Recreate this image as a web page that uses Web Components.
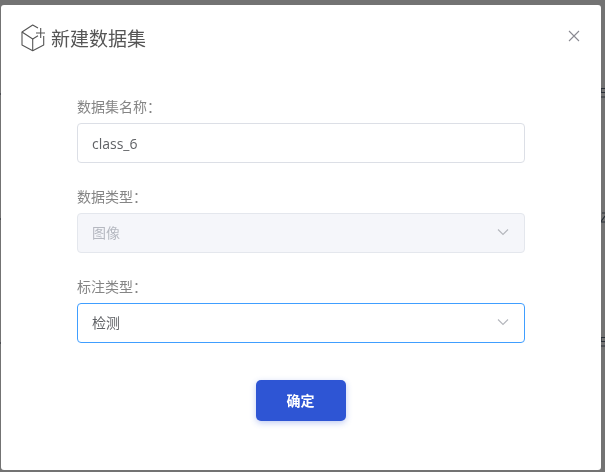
<!DOCTYPE html>
<html lang="zh">
<head>
<meta charset="utf-8">
<title>新建数据集</title>
<style>
  html, body { margin: 0; height: 100%; background: #737373; overflow: hidden; }
  body { font-family: "Open Sans", "Noto Sans CJK SC", sans-serif; }
</style>
</head>
<body>
<page-marks></page-marks>
<dataset-dialog heading="新建数据集">
  <form-field label="数据集名称：">
    <text-box value="class_6"></text-box>
  </form-field>
  <form-field label="数据类型：">
    <select-box value="图像" disabled></select-box>
  </form-field>
  <form-field label="标注类型：">
    <select-box value="检测" focused></select-box>
  </form-field>
  <primary-button slot="footer">确定</primary-button>
</dataset-dialog>

<script>
// what still shows of the page behind the dialog: slivers at the left and right edge
class PageMarks extends HTMLElement {
    constructor() {
        super();
        this.attachShadow({ mode: 'open' });
    }

    connectedCallback() {
        const five = 'M0 1.5 H4 M0 5.5 H4 M0 1.5 V5.5 M0 10 H4';
        const two = 'M0 9.5 L4 4 M0 10 H4 M1 1 H4';
        const rows = [five, two, five].map(d => `
            <div class="row">
                <svg class="l" viewBox="0 0 1 11"><path d="M0 7 H1" stroke="#262b33"/></svg>
                <svg class="r" viewBox="0 0 4 11" fill="none" stroke="#2a3038" stroke-width="1.2"><path d="${d}"/></svg>
            </div>`);
        this.shadowRoot.innerHTML = `
            <style>
                :host {
                    position: fixed;
                    inset: 0;
                    display: flex;
                    flex-direction: column;
                    gap: 113.5px;
                    padding-top: 87px;
                    box-sizing: border-box;
                }
                .row { display: flex; justify-content: space-between; height: 11px; }
                svg { display: block; height: 11px; }
                .l { width: 1px; }
                .r { width: 4px; }
            </style>
            ${rows.join('')}
        `;
    }
}

class DatasetDialog extends HTMLElement {
    constructor() {
        super();
        this.attachShadow({ mode: 'open' });
    }

    connectedCallback() {
        this.shadowRoot.innerHTML = `
            <style>
                :host {
                    display: block;
                    position: relative;
                    box-sizing: border-box;
                    height: 100%;
                    padding: 5px 4px 2px 1px;
                }
                .dialog {
                    box-sizing: border-box;
                    height: 465px;
                    background: #fff;
                    border-radius: 3px;
                    display: flex;
                    flex-direction: column;
                }
                .header {
                    display: flex;
                    align-items: center;
                    height: 66px;
                    padding: 0 20px;
                    color: #555;
                }
                .header svg.logo { width: 28px; height: 28px; margin-right: 2px; flex: none; }
                h1 {
                    margin: 0;
                    padding-top: 2px;
                    font-size: 19px;
                    font-weight: 400;
                    line-height: 64px;
                    flex: 1;
                }
                .close { width: 14px; height: 14px; margin-bottom: 4px; flex: none; }
                .body {
                    display: flex;
                    flex-direction: column;
                    gap: 24px;
                    padding: 26px 76px 0;
                }
                .footer {
                    display: flex;
                    justify-content: center;
                    padding-top: 37px;
                }
            </style>
            <div class="dialog">
                <div class="header">
                    <svg class="logo" viewBox="0 0 28 28" fill="none" stroke="#555" stroke-width="1.1" stroke-linejoin="round">
                        <path d="M17 4 L11.7 1 L1 8 V21 L11.7 26.7 L22.7 21 V12"/>
                        <path d="M1 8 L11.7 15 L17 11.8"/>
                        <path d="M11.7 15 V26.7"/>
                        <path d="M19.7 4 V14 M15 9 H24"/>
                    </svg>
                    <h1>${this.getAttribute('heading')}</h1>
                    <svg class="close" viewBox="0 0 14 14" fill="none" stroke="#8a8a92" stroke-width="1.1">
                        <path d="M2 2 L12 12 M12 2 L2 12"/>
                    </svg>
                </div>
                <div class="body"><slot></slot></div>
                <div class="footer"><slot name="footer"></slot></div>
            </div>
        `;
    }
}

class FormField extends HTMLElement {
    constructor() {
        super();
        this.attachShadow({ mode: 'open' });
    }

    connectedCallback() {
        this.shadowRoot.innerHTML = `
            <style>
                :host { display: block; }
                .label {
                    font-size: 14px;
                    line-height: 20px;
                    color: #858585;
                    margin-bottom: 6px;
                }
            </style>
            <div class="label">${this.getAttribute('label')}</div>
            <slot></slot>
        `;
    }
}

class TextBox extends HTMLElement {
    constructor() {
        super();
        this.attachShadow({ mode: 'open' });
    }

    connectedCallback() {
        this.shadowRoot.innerHTML = `
            <style>
                :host {
                    display: flex;
                    align-items: center;
                    box-sizing: border-box;
                    height: 40px;
                    padding: 0 14px;
                    border: 1px solid #dcdfe6;
                    border-radius: 4px;
                    background: #fff;
                    font-size: 14px;
                    color: #606266;
                }
            </style>
            <span>${this.getAttribute('value')}</span>
        `;
    }
}

class SelectBox extends HTMLElement {
    constructor() {
        super();
        this.attachShadow({ mode: 'open' });
    }

    connectedCallback() {
        this.shadowRoot.innerHTML = `
            <style>
                :host {
                    display: flex;
                    align-items: center;
                    justify-content: space-between;
                    box-sizing: border-box;
                    height: 40px;
                    padding: 0 14px 2px;
                    border: 1px solid #dcdfe6;
                    border-radius: 4px;
                    background: #fff;
                    font-size: 14px;
                    color: #606266;
                }
                :host([disabled]) {
                    background: #f5f6fa;
                    border-color: #e4e7ed;
                    color: #b5b8c0;
                }
                :host([focused]) { border-color: #409eff; }
                svg { width: 14px; height: 14px; }
            </style>
            <span>${this.getAttribute('value')}</span>
            <svg viewBox="0 0 14 14" fill="none" stroke="#b4b6bc" stroke-width="1.1">
                <path d="M2 4.5 L7 9.5 L12 4.5"/>
            </svg>
        `;
    }
}

class PrimaryButton extends HTMLElement {
    constructor() {
        super();
        this.attachShadow({ mode: 'open' });
    }

    connectedCallback() {
        this.shadowRoot.innerHTML = `
            <style>
                :host {
                    display: flex;
                    align-items: center;
                    justify-content: center;
                    box-sizing: border-box;
                    width: 90px;
                    height: 41px;
                    padding: 0 1px 2px 0;
                    border-radius: 5px;
                    background: #2e55d4;
                    box-shadow: 0 2px 6px rgba(46, 85, 212, .3);
                    color: #fff;
                    font-size: 14px;
                    font-weight: 700;
                }
            </style>
            <slot></slot>
        `;
    }
}

customElements.define('page-marks', PageMarks);
customElements.define('dataset-dialog', DatasetDialog);
customElements.define('form-field', FormField);
customElements.define('text-box', TextBox);
customElements.define('select-box', SelectBox);
customElements.define('primary-button', PrimaryButton);
</script>
</body>
</html>
